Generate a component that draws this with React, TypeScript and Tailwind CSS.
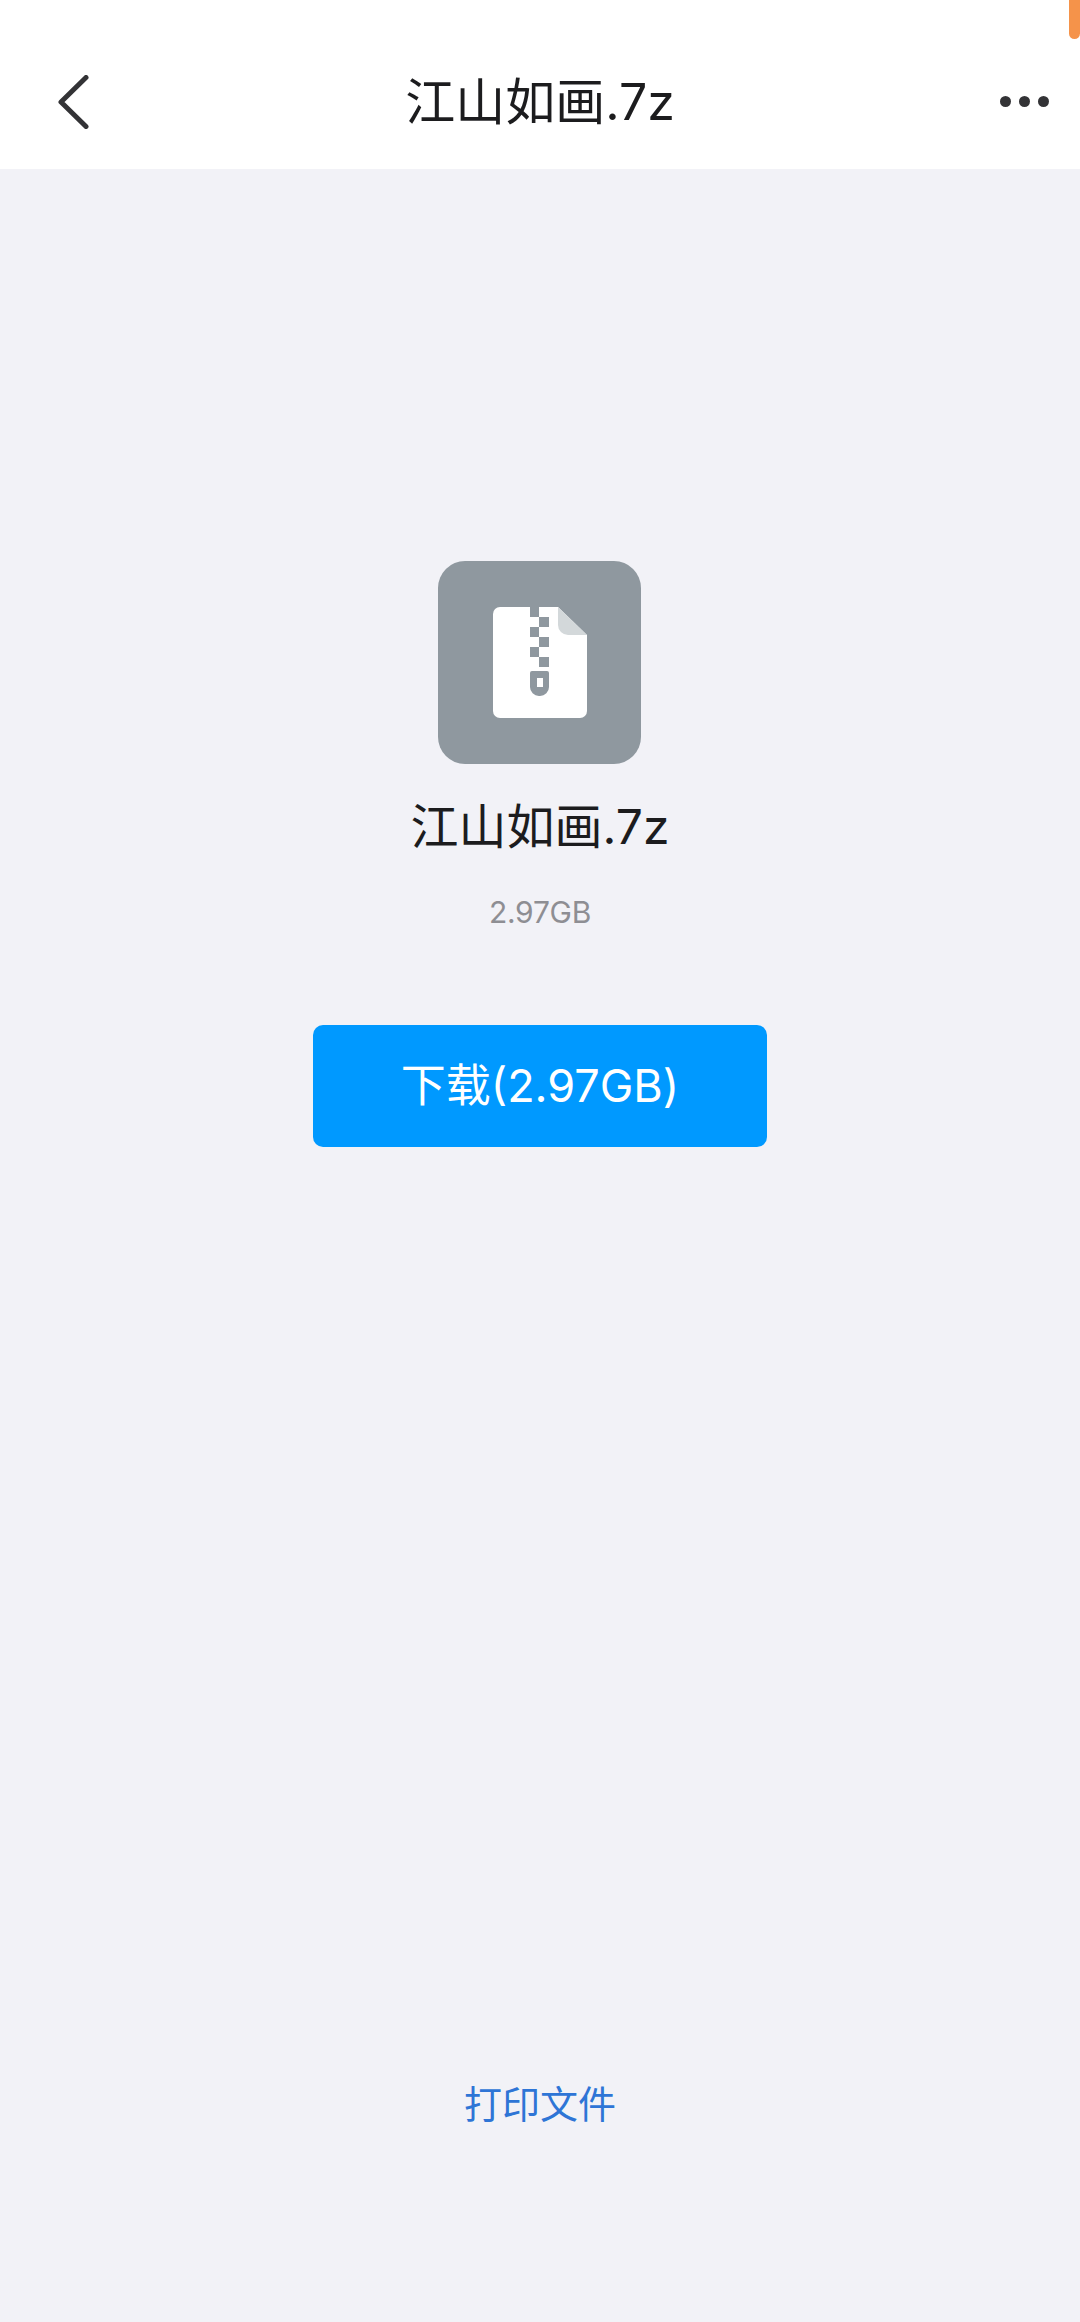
import React from 'react';

const cjk = { fontFamily: 'Inter, "Noto Sans CJK SC", sans-serif' };

const ZipIcon = () => (
    <div className="mr-[1px] flex h-[203px] w-[203px] items-center justify-center rounded-[27px] bg-[#8f989f]">
        <svg width="94" height="111" viewBox="0 0 94 111" fill="none">
            <path d="M7 0H65L94 28V104a7 7 0 0 1-7 7H7a7 7 0 0 1-7-7V7a7 7 0 0 1 7-7Z" fill="#fff" />
            <path d="M65 0L94 28H75a10 10 0 0 1-10-10Z" fill="#d3d8da" />
            <path d="M37 0h9v10h-9ZM46 10h10v10H46ZM37 20h9v10h-9ZM46 30h10v10H46ZM37 40h9v10h-9ZM46 50h10v10H46Z" fill="#8f989f" />
            <path fillRule="evenodd" d="M39 64h15a2 2 0 0 1 2 2v14a9 9 0 0 1-9 9h-1a9 9 0 0 1-9-9V66a2 2 0 0 1 2-2ZM44 71h6v9h-6Z" fill="#8f989f" />
        </svg>
    </div>
);

export default function App() {
    return (
        <div className="relative flex h-[2322px] w-[1080px] flex-col bg-[#f2f2f7]" style={cjk}>
            <div className="absolute right-0 top-0 h-[39px] w-[11px] rounded-b-[6px] bg-[#f5934a]" />

            <header className="flex h-[169px] shrink-0 items-center justify-between bg-white pl-[56px] pr-[31px] pt-[34px]">
                <div className="w-[70px]">
                    <svg width="34" height="54" viewBox="0 0 34 54" fill="none">
                        <path d="M30 2.5L5 27l25 24.5" stroke="#333336" strokeWidth="5" strokeLinecap="round" strokeLinejoin="round" />
                    </svg>
                </div>
                <h1 className="text-[50px] leading-[60px] text-[#1c1c1e]">江山如画.7z</h1>
                <div className="flex w-[95px] justify-end gap-[8px]">
                    <span className="h-[11px] w-[11px] rounded-full bg-[#333336]" />
                    <span className="h-[11px] w-[11px] rounded-full bg-[#333336]" />
                    <span className="h-[11px] w-[11px] rounded-full bg-[#333336]" />
                </div>
            </header>

            <main className="flex flex-1 flex-col items-center pt-[392px]">
                <ZipIcon />
                <div className="mt-[33px] text-[48px] leading-[60px] text-[#1c1c1e]">江山如画.7z</div>
                <div className="mt-[35px] text-[30px] leading-[40px] tracking-[-0.25px] text-[#8e8e93]">2.97GB</div>
                <button className="mt-[93px] h-[122px] w-[454px] rounded-[10px] bg-[#0099ff] text-[45px] text-white">
                    下载(2.97GB)
                </button>
                <button className="mb-[193px] mt-auto text-[38px] leading-[50px] text-[#2e75d6]">打印文件</button>
            </main>
        </div>
    );
}
